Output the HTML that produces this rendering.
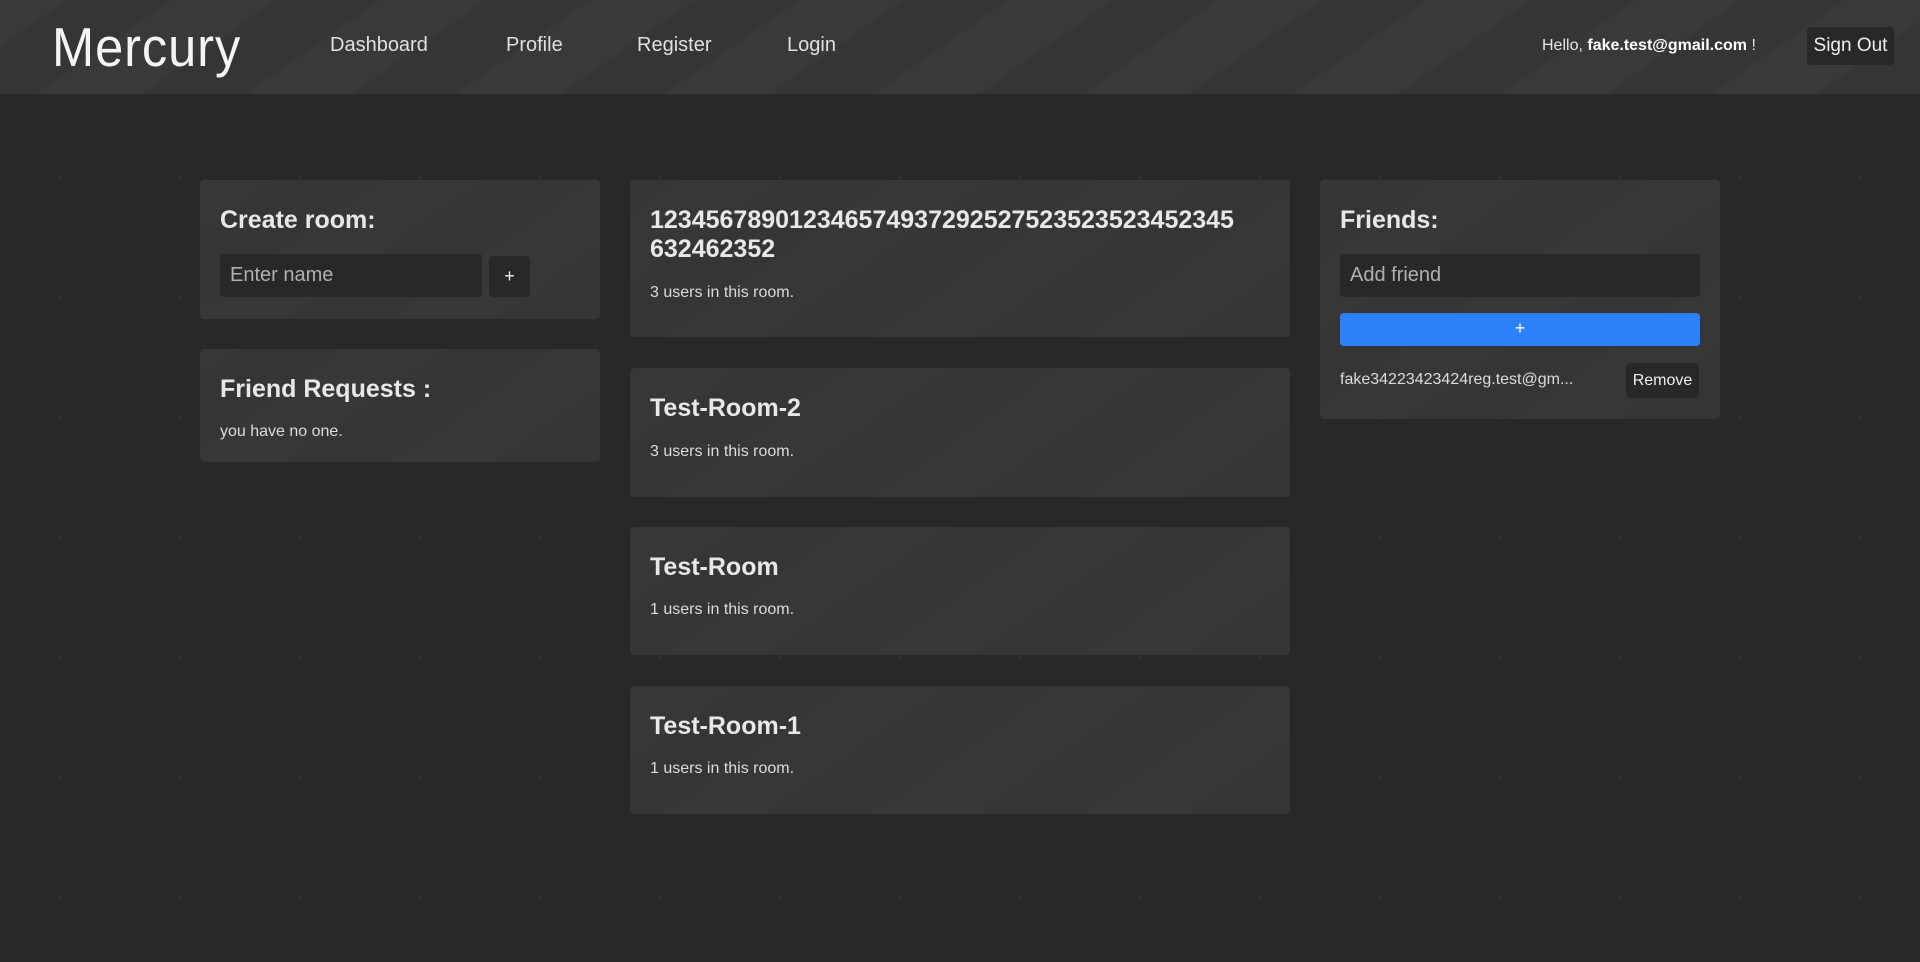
<!DOCTYPE html>
<html><head><meta charset="utf-8"><style>
*{margin:0;padding:0;box-sizing:border-box}
body{width:1920px;height:962px;overflow:hidden;background:#282828;font-family:"Liberation Sans",sans-serif;color:#e6e6e6;position:relative;
background-image:radial-gradient(circle,#313131 1.5px,transparent 2px);background-size:120px 120px;background-position:0 -2px}
.hdr{position:absolute;left:0;top:0;width:1920px;height:94px;background:#353535;
background-image:repeating-linear-gradient(-35deg,rgba(255,255,255,0) 0 60px,rgba(255,255,255,.018) 60px 120px)}
.abs{position:absolute;white-space:nowrap}
.logo{left:52px;top:15px;font-size:55px;font-weight:300;color:#f4f4f4;letter-spacing:1px;transform:scaleX(0.92);transform-origin:left}
.nav{top:34px;font-size:20px;color:#e0e0e0}
.card{position:absolute;background:#353535;border-radius:4px;
background-image:repeating-linear-gradient(-35deg,rgba(255,255,255,0) 0 60px,rgba(255,255,255,.012) 60px 120px)}
.t{position:absolute;left:20px;font-weight:bold;font-size:25px;color:#e8e8e8;white-space:nowrap}
.s{position:absolute;left:20px;font-size:16px;color:#dcdcdc;white-space:nowrap}
.inp{position:absolute;background:#282828;border-radius:4px;color:#b0b0b0;font-size:20px;padding-left:10px;line-height:43px}
.btn{position:absolute;background:#282828;border-radius:4px;color:#eee;text-align:center}
</style></head><body>
<div class="hdr"></div>
<div class="abs logo">Mercury</div>
<div class="abs nav" style="left:330px">Dashboard</div>
<div class="abs nav" style="left:506px">Profile</div>
<div class="abs nav" style="left:637px">Register</div>
<div class="abs nav" style="left:787px">Login</div>
<div class="abs" style="left:1542px;top:37px;font-size:16px;color:#e6e6e6">Hello, <b style="color:#fff">fake.test@gmail.com</b> !</div>
<div class="btn" style="left:1807px;top:27px;width:87px;height:38px;line-height:38px;font-size:19px;background:#282828">Sign Out</div>

<div class="card" style="left:200px;top:180px;width:400px;height:139px">
<div class="t" style="top:26px">Create room:</div>
<div class="inp" style="left:20px;top:74px;width:262px;height:43px">Enter name</div>
<div class="btn" style="left:289px;top:76px;width:41px;height:41px;line-height:41px;font-size:18px">+</div>
</div>
<div class="card" style="left:200px;top:349px;width:400px;height:113px">
<div class="t" style="top:26px">Friend Requests :</div>
<div class="s" style="top:74px">you have no one.</div>
</div>

<div class="card" style="left:630px;top:180px;width:660px;height:157px">
<div class="t" style="top:26px;line-height:29px">123456789012346574937292527523523523452345<br>632462352</div>
<div class="s" style="top:104px">3 users in this room.</div>
</div>
<div class="card" style="left:630px;top:368px;width:660px;height:129px">
<div class="t" style="top:26px">Test-Room-2</div>
<div class="s" style="top:75px">3 users in this room.</div>
</div>
<div class="card" style="left:630px;top:527px;width:660px;height:128px">
<div class="t" style="top:26px">Test-Room</div>
<div class="s" style="top:74px">1 users in this room.</div>
</div>
<div class="card" style="left:630px;top:686px;width:660px;height:128px">
<div class="t" style="top:26px">Test-Room-1</div>
<div class="s" style="top:74px">1 users in this room.</div>
</div>

<div class="card" style="left:1320px;top:180px;width:400px;height:239px">
<div class="t" style="top:26px">Friends:</div>
<div class="inp" style="left:20px;top:74px;width:360px;height:43px">Add friend</div>
<div class="btn" style="left:20px;top:133px;width:360px;height:33px;line-height:31px;background:#2d80f8;font-size:18px;color:#fff">+</div>
<div class="s" style="top:191px;font-size:16px">fake34223423424reg.test@gm...</div>
<div class="btn" style="left:306px;top:183px;width:73px;height:35px;line-height:35px;font-size:16px">Remove</div>
</div>
</body></html>
